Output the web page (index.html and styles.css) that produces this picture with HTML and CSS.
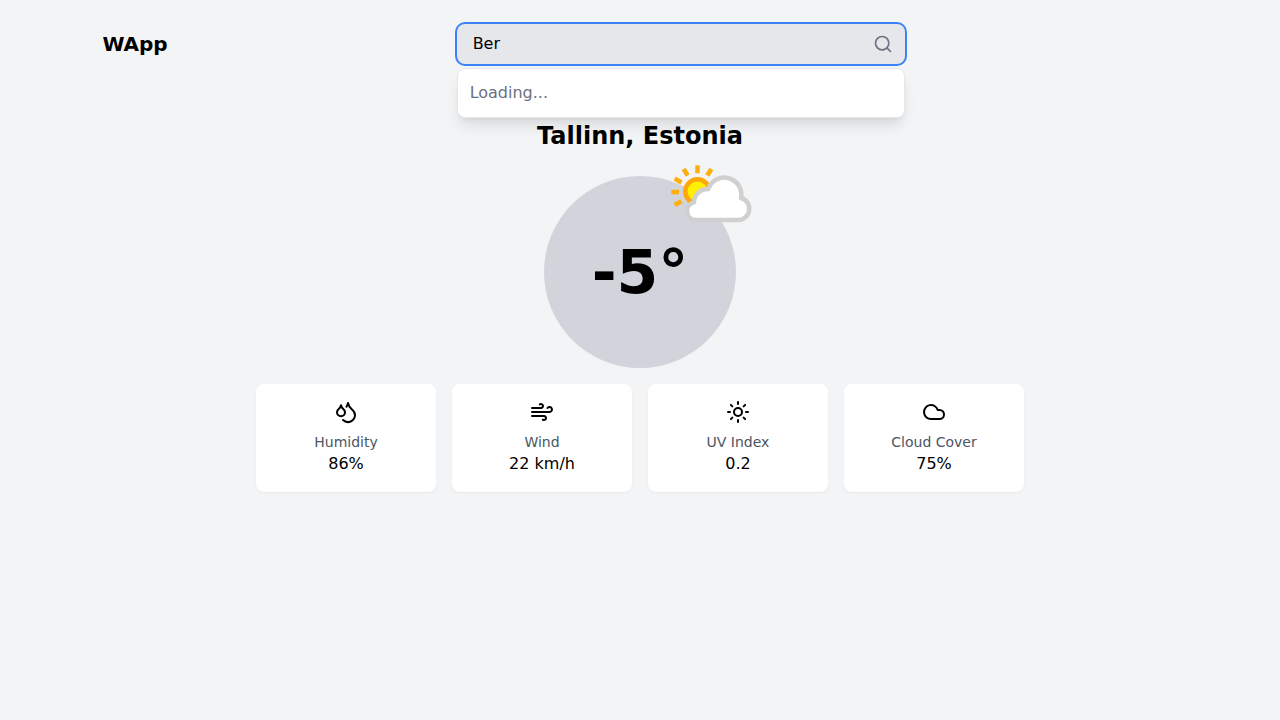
FILE: index.html
```html
<!DOCTYPE html>
<html lang="en">
<head>
  <meta charset="utf-8">
  <meta name="viewport" content="width=device-width, initial-scale=1">
  <title>WApp</title>
  <link rel="stylesheet" href="styles.css">
</head>
<body>
  <header class="header">
    <h1 class="brand">WApp</h1>
    <div class="search-area">
      <form class="search" role="search">
        <input class="search-input" type="text" value="Ber" aria-label="Search city" autocomplete="off">
        <button class="search-button" type="submit" aria-label="Search">
          <svg class="search-icon" viewBox="0 0 24 24" aria-hidden="true"><circle cx="11" cy="11" r="8"/><path d="m21 21-4.3-4.3"/></svg>
        </button>
        <div class="suggestions" role="status">Loading...</div>
      </form>
    </div>
  </header>

  <main class="main">
    <h2 class="location">Tallinn, Estonia</h2>
    <div class="current">
      <p class="temperature">-5°</p>
      <svg class="condition" viewBox="0 0 96 96" role="img" aria-label="Partly cloudy">
        <path class="rays" d="M41.5 13.3v8M55.3 17l-4 6.5M27.7 17l4 6.5M18.7 26.5l6.8 4M15.3 40H23M18.7 53l6.8-3.8"/>
        <circle class="sun" cx="41.5" cy="39.5" r="12.2"/>
        <path class="cloud" d="M39 68A9 9 0 0 1 38 50.3A13.3 13.3 0 0 1 52.3 37A17 17 0 0 1 85 46A11.2 11.2 0 0 1 82.4 68Z"/>
      </svg>
    </div>

    <section class="details" aria-label="Current conditions">
      <article class="card">
        <svg class="icon" viewBox="0 0 24 24" aria-hidden="true"><path d="M7 16.3c2.2 0 4-1.83 4-4.05 0-1.16-.57-2.26-1.71-3.19S7.29 6.75 7 5.3c-.29 1.45-1.14 2.84-2.29 3.76S3 11.1 3 12.25c0 2.22 1.8 4.05 4 4.05z"/><path d="M12.56 6.6A10.97 10.97 0 0 0 14 3.02c.5 2.5 2 4.9 4 6.5s3 3.5 3 5.5a6.98 6.98 0 0 1-11.91 4.97"/></svg>
        <h3 class="label">Humidity</h3>
        <p class="value">86%</p>
      </article>
      <article class="card">
        <svg class="icon" viewBox="0 0 24 24" aria-hidden="true"><path d="M12.8 19.6A2 2 0 1 0 14 16H2"/><path d="M17.5 8a2.5 2.5 0 1 1 2 4H2"/><path d="M9.8 4.4A2 2 0 1 1 11 8H2"/></svg>
        <h3 class="label">Wind</h3>
        <p class="value">22 km/h</p>
      </article>
      <article class="card">
        <svg class="icon" viewBox="0 0 24 24" aria-hidden="true"><circle cx="12" cy="12" r="4"/><path d="M12 2v2M12 20v2M4.93 4.93l1.41 1.41M17.66 17.66l1.41 1.41M2 12h2M20 12h2M6.34 17.66l-1.41 1.41M19.07 4.93l-1.41 1.41"/></svg>
        <h3 class="label">UV Index</h3>
        <p class="value">0.2</p>
      </article>
      <article class="card">
        <svg class="icon" viewBox="0 0 24 24" aria-hidden="true"><path d="M17.5 19H9a7 7 0 1 1 6.71-9h1.79a4.5 4.5 0 1 1 0 9Z"/></svg>
        <h3 class="label">Cloud Cover</h3>
        <p class="value">75%</p>
      </article>
    </section>
  </main>
</body>
</html>
```

FILE: styles.css
```css
* {
  box-sizing: border-box;
}

body {
  margin: 0;
  min-height: 100vh;
  background: #f3f4f6;
  color: #000;
  font: 16px/24px "DejaVu Sans", sans-serif;
}

h1, h2, h3, p {
  margin: 0;
}

.header {
  display: flex;
  align-items: center;
  gap: 16px;
  padding: 24px 8%;
}

.brand {
  font-size: 20px;
  line-height: 28px;
}

.search-area {
  flex: 1;
  display: flex;
  justify-content: center;
}

.search {
  position: relative;
  display: flex;
  width: 100%;
  max-width: 448px;
}

.search-input {
  width: 100%;
  height: 40px;
  padding: 8px 48px 10px 16px;
  border: 0;
  border-radius: 8px;
  outline: 0;
  background: #e5e7eb;
  box-shadow: 0 0 0 2px #3b82f6;
  color: #000;
  font: inherit;
  line-height: normal;
}

.search-button {
  position: absolute;
  top: 0;
  right: 0;
  height: 40px;
  padding: 0 12px;
  border: 0;
  background: none;
  color: #6b7280;
  cursor: pointer;
}

.search-icon {
  display: block;
  width: 20px;
  height: 20px;
}

.search-icon,
.icon {
  fill: none;
  stroke: currentColor;
  stroke-width: 2;
  stroke-linecap: round;
  stroke-linejoin: round;
}

.suggestions {
  position: absolute;
  z-index: 10;
  top: 100%;
  left: 0;
  right: 0;
  margin-top: 4px;
  padding: 12px;
  border: 1px solid #e5e7eb;
  border-radius: 8px;
  background: #fff;
  box-shadow: 0 10px 15px -3px rgb(0 0 0 / 10%), 0 4px 6px -4px rgb(0 0 0 / 10%);
  color: #6b7280;
}

.main {
  display: flex;
  flex-direction: column;
  align-items: center;
  padding: 32px 16px;
}

.location {
  margin-bottom: 24px;
  font-size: 24px;
  line-height: 32px;
  text-align: center;
}

.current {
  position: relative;
  display: flex;
  align-items: center;
  justify-content: center;
  width: 192px;
  height: 192px;
  margin-bottom: 16px;
  border-radius: 50%;
  background: #d1d5db;
}

.temperature {
  font-size: 60px;
  font-weight: 700;
  line-height: 60px;
}

.condition {
  position: absolute;
  top: -24px;
  right: -16px;
  width: 96px;
  height: 96px;
}

.rays {
  fill: none;
  stroke: #ffae0b;
  stroke-width: 4.5;
}

.sun {
  fill: #fff000;
  stroke: #ffa70b;
  stroke-width: 4.5;
}

.cloud {
  fill: #fff;
  stroke: #d0d0d0;
  stroke-width: 4.5;
  stroke-linejoin: round;
}

.details {
  display: grid;
  grid-template-columns: repeat(auto-fit, minmax(160px, 1fr));
  gap: 16px;
  width: 100%;
  max-width: 768px;
}

.card {
  display: flex;
  flex-direction: column;
  align-items: center;
  padding: 16px;
  border-radius: 8px;
  background: #fff;
  box-shadow: 0 1px 2px rgb(0 0 0 / 5%);
}

.icon {
  width: 24px;
  height: 24px;
  margin-bottom: 8px;
}

.label {
  color: #4b5563;
  font-size: 14px;
  font-weight: 400;
  line-height: 20px;
}
```
